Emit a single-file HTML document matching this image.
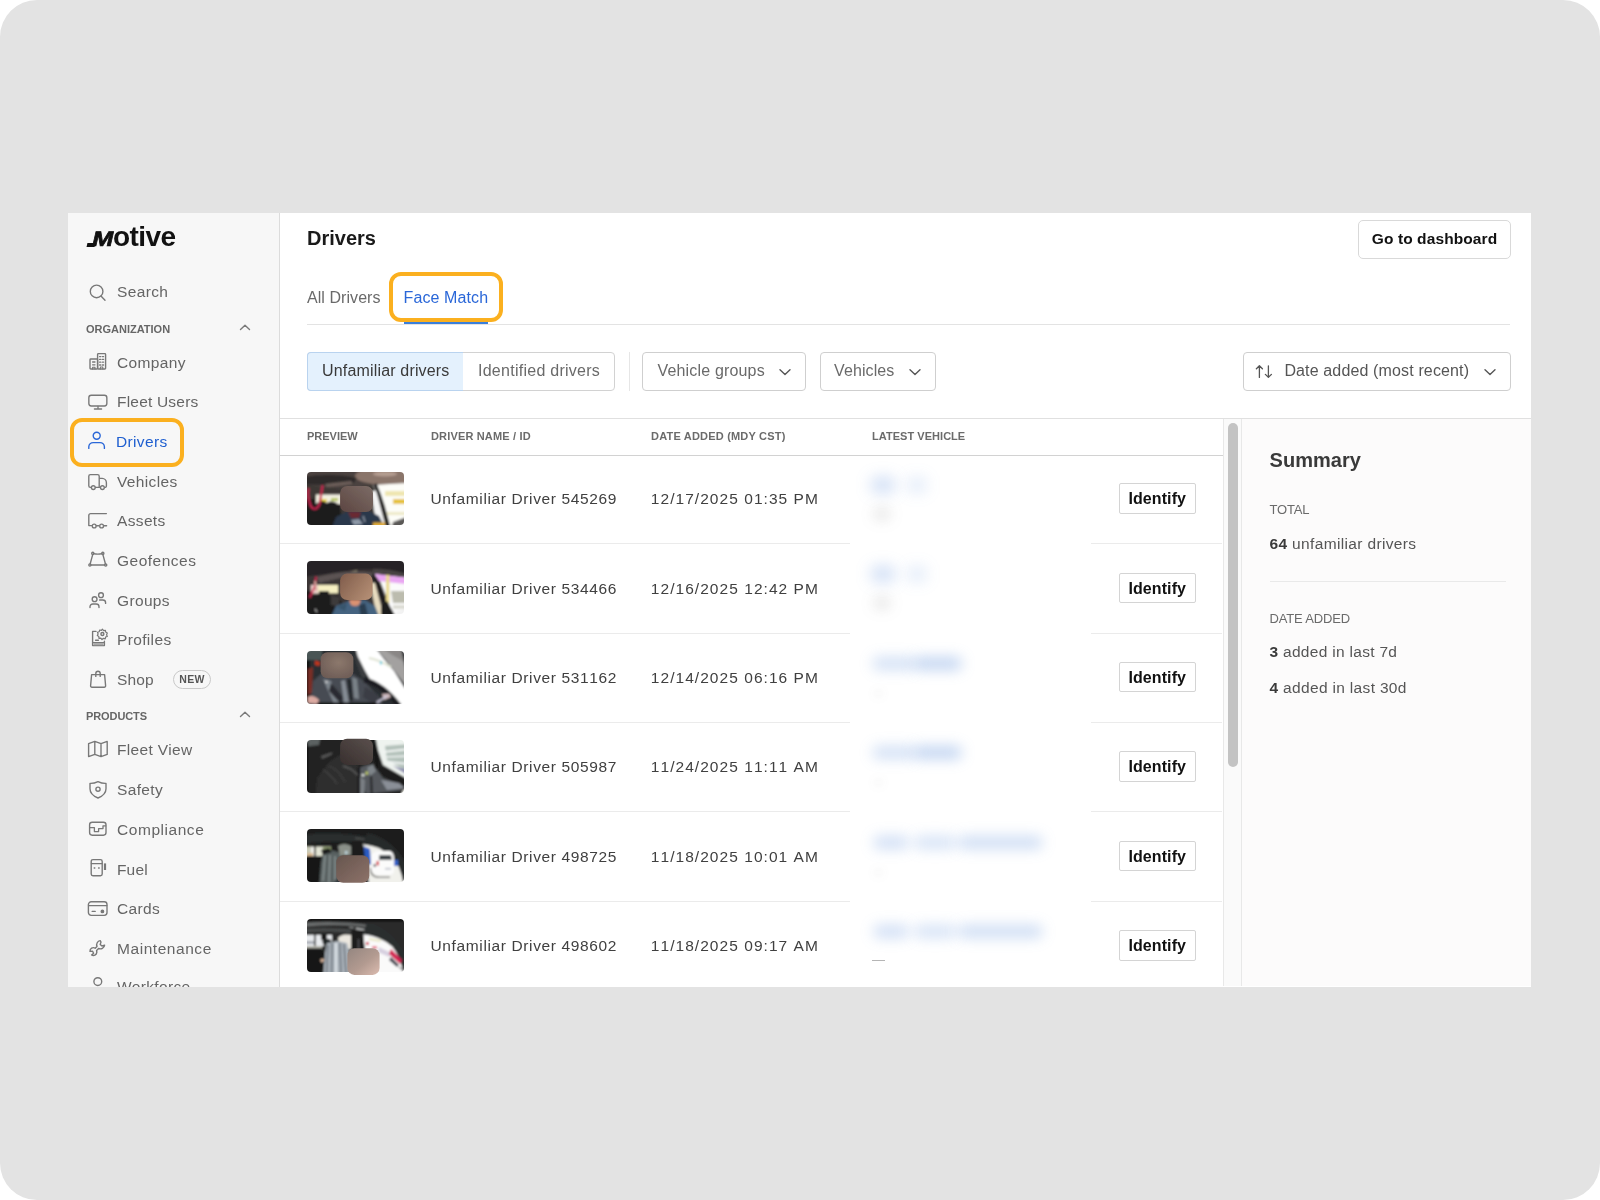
<!DOCTYPE html>
<html lang="en">
<head>
<meta charset="utf-8">
<title>Drivers - Face Match</title>
<style>
*{box-sizing:border-box;margin:0;padding:0}
html,body{width:1600px;height:1200px;overflow:hidden;background:#fff}
body{font-family:"Liberation Sans",Arial,sans-serif;color:#3d3d3d;position:relative}
.bg{position:absolute;left:0;top:0;width:1600px;height:1200px;background:#e3e3e3;border-radius:37px}
.app{opacity:.999;position:absolute;left:68px;top:213px;width:1463px;height:773.5px;background:#fff;overflow:hidden}
.abs{position:absolute;white-space:nowrap}
/* sidebar */
.side{position:absolute;left:0;top:0;width:212px;height:774px;background:#f7f7f7;border-right:1px solid #dcdcdc}
.nav{position:absolute;margin-top:.7px;left:49px;font-size:15.5px;color:#656565;white-space:nowrap;line-height:20px;letter-spacing:.35px}
.nav.act{color:#1f5fd0}
.sec{position:absolute;left:18px;font-size:11px;font-weight:bold;color:#666;letter-spacing:.1px;white-space:nowrap;line-height:12px}
.ico{position:absolute;margin-top:.5px;left:19px;width:22px;height:22px;overflow:visible}
.ico *{fill:none;stroke:#787878;stroke-width:1.38;stroke-linecap:round;stroke-linejoin:round}
.hl{position:absolute;border:4px solid #fbb01f;border-radius:12px}
/* main */
.main{position:absolute;left:212px;top:0;width:1251px;height:774px;background:#fff}
.btn{position:absolute;border:1px solid #cfcfcf;border-radius:4px;background:#fff;white-space:nowrap;text-align:center}
.th{position:absolute;top:217px;font-size:11px;font-weight:bold;color:#6b6b6b;letter-spacing:.1px;white-space:nowrap;line-height:12px}
.row{position:absolute;left:0;width:942px;height:90px}
.row .sep{position:absolute;left:0;bottom:0;width:942px;height:1px;background:#ebebeb}
.row .name,.row .date{position:absolute;top:35px;font-size:15.5px;line-height:20px;color:#404040;white-space:nowrap;letter-spacing:.58px}
.row .name{left:150.5px;font-kerning:none;letter-spacing:.63px}
.row .date{left:370.8px;letter-spacing:1.05px;font-kerning:none}
.row .idb{position:absolute;left:839px;top:29px;width:76.5px;height:30.5px;border:1px solid #d4d4d4;border-radius:2px;background:#fff;font-size:16px;font-weight:bold;color:#111;text-align:center;line-height:30.5px;letter-spacing:.08px}
.thumb{position:absolute;left:27px;top:17.7px;width:97px;height:53px}
.thumb svg{display:block}
.blur{position:absolute;border-radius:8px;filter:blur(4px)}
</style>
</head>
<body>
<div class="bg"></div>
<div class="app">
  <div class="side" id="side">
    <div class="abs" id="logo" style="left:18px;top:7.6px;font-size:28px;font-weight:bold;color:#111;letter-spacing:-.55px;line-height:32px"><span style="display:inline-block;font-size:21px;letter-spacing:0;transform:skewX(-13deg) scaleX(1.2);transform-origin:0 100%;margin-left:3.2px;margin-right:6.2px;-webkit-text-stroke:.7px #111">M</span>otive</div>
    <div class="abs" style="left:18.8px;top:29.6px;width:8px;height:3.8px;background:#111;transform:skewX(-13deg)"></div>

    <svg class="ico" style="top:68px" viewBox="0 0 22 22"><circle cx="9.6" cy="9.4" r="6.3"/><path d="M14.2 14.2 L18 18.2"/></svg>
    <div class="nav" style="top:68px">Search</div>

    <div class="sec" style="top:110px;letter-spacing:0px">ORGANIZATION</div>
    <svg class="ico" style="top:103.3px;left:166.2px" viewBox="0 0 22 22"><path d="M6.5 12.5 L11 8.3 L15.5 12.5" style="stroke:#7a7a7a;stroke-width:1.4"/></svg>

    <svg class="ico" style="top:138px" viewBox="0 0 22 22"><rect x="10.6" y="1.6" width="8" height="15.4" rx=".8"/><rect x="3" y="7" width="7.6" height="10" rx=".8"/><path d="M12.6 4.6 h1.2 M15.4 4.6 h1.2 M12.6 7.4 h1.2 M15.4 7.4 h1.2 M12.6 10.2 h1.2 M15.4 10.2 h1.2 M12.6 13 h1.2 M15.4 13 h1.2 M5.6 10 h2.4 M5.6 12.8 h2.4" style="stroke-width:1.3"/><path d="M13.4 17 v-2 h2.4 v2 M5.6 17 v-1.8 h2.4 v1.8" style="stroke-width:1.1"/></svg>
    <div class="nav" style="top:139px">Company</div>

    <svg class="ico" style="top:177px" viewBox="0 0 22 22"><rect x="1.85" y="4.25" width="18" height="10.7" rx="2.4"/><path d="M7.4 18 H14.6 M11 15.4 V17.6" style="stroke-width:1.3"/></svg>
    <div class="nav" style="top:178px;letter-spacing:0.2px">Fleet Users</div>

    <div class="hl" style="left:2px;top:205px;width:114px;height:49px"></div>
    <svg class="ico" style="top:217px" viewBox="0 0 22 22"><circle cx="9.7" cy="4.8" r="3.5" style="stroke:#2a67d8"/><path d="M1.8 17.4 V15.8 A4.4 4.4 0 0 1 6.2 11.6 H13 A4.4 4.4 0 0 1 17.4 15.8 V17.4" style="stroke:#2a67d8"/></svg>
    <div class="nav act" style="top:218px;left:48px">Drivers</div>

    <svg class="ico" style="top:257px" viewBox="0 0 22 22"><path d="M4 16.4 H3.4 A1.6 1.6 0 0 1 1.8 14.8 V5.2 A1.6 1.6 0 0 1 3.4 3.6 H10.6 A1.6 1.6 0 0 1 12.2 5.2 V16 M12.2 7.4 H15.2 A4.4 4.4 0 0 1 19.4 11.8 V15 A1.4 1.4 0 0 1 18.4 16.4 M8.6 16.4 H12.4"/><circle cx="6.3" cy="16.6" r="1.9"/><circle cx="15.4" cy="16.6" r="1.9"/></svg>
    <div class="nav" style="top:258px">Vehicles</div>

    <svg class="ico" style="top:296px" viewBox="0 0 22 22"><path d="M19.4 3.6 H3.6 A1.8 1.8 0 0 0 1.8 5.4 V15.6 H4.6 M17.4 15.8 H19.6 M9.6 15.8 H11.6"/><circle cx="7.2" cy="16" r="1.9"/><circle cx="14.6" cy="16" r="1.9"/></svg>
    <div class="nav" style="top:297px">Assets</div>

    <svg class="ico" style="top:336px" viewBox="0 0 22 22"><path d="M6.6 3.6 Q10.8 4.6 15 3.6 M15.9 4.6 L18.4 13.8 M3.2 13.8 L5.7 4.6 M4 15 H17.6"/><circle cx="5.8" cy="3.4" r="1.1"/><circle cx="15.8" cy="3.4" r="1.1"/><circle cx="2.9" cy="15" r="1.1"/><circle cx="18.7" cy="15" r="1.1"/></svg>
    <div class="nav" style="top:337px;letter-spacing:0.5px">Geofences</div>

    <svg class="ico" style="top:376px" viewBox="0 0 22 22"><circle cx="7.6" cy="9.2" r="2.4"/><circle cx="14" cy="5.2" r="2.4"/><path d="M3 17.6 V16.8 A2.8 2.8 0 0 1 5.8 14 H9.2 A2.8 2.8 0 0 1 12 16.8 V17.6 M12.6 10 H15.8 A2.8 2.8 0 0 1 18.6 12.8 V13.4"/></svg>
    <div class="nav" style="top:377px">Groups</div>

    <svg class="ico" style="top:413.6px;left:19.5px" viewBox="0 0 22 22"><path d="M8 4.4 H4.6 V18.6 H16.4 V14.2 M4.6 15.6 H16.4 M7.6 13.2 H10.4"/><circle cx="14.4" cy="7" r="1.5"/><path d="M14.4 2.2 L15.6 3.6 L17.4 3.3 L17.7 5.1 L19.3 6 L18.6 7.7 L19.3 9.4 L17.6 10 L17.2 11.8 L15.4 11.3 L14 12.5 L12.8 11.1 L11 11.4 L10.8 9.6 L9.3 8.6 L10.1 7 L9.5 5.3 L11.2 4.7 L11.7 3 L13.4 3.4 Z" style="stroke-width:1.2"/><path d="M5.4 17.2 H15.6" style="stroke-width:2.2;stroke-linecap:butt;stroke:#a8a8a8"/></svg>
    <div class="nav" style="top:416px">Profiles</div>

    <svg class="ico" style="top:455px" viewBox="0 0 22 22"><path d="M4.6 5.6 H17.6 L18.6 16.6 A1.4 1.4 0 0 1 17.2 18.2 H5 A1.4 1.4 0 0 1 3.6 16.6 Z M8.8 7.4 V4.4 A2.2 2.2 0 0 1 13.2 4.4 V7.4"/></svg>
    <div class="nav" style="top:456px;letter-spacing:0.1px">Shop</div>
    <div class="abs" style="left:105px;top:457px;width:38px;height:19px;border:1px solid #c9c9c9;border-radius:10px;font-size:10.5px;font-weight:bold;color:#555;text-align:center;line-height:17px;letter-spacing:.3px">NEW</div>

    <div class="sec" style="top:497px;letter-spacing:-0.1px">PRODUCTS</div>
    <svg class="ico" style="top:490.3px;left:166.2px" viewBox="0 0 22 22"><path d="M6.5 12.5 L11 8.3 L15.5 12.5" style="stroke:#7a7a7a;stroke-width:1.4"/></svg>

    <svg class="ico" style="top:525px" viewBox="0 0 22 22"><path d="M1.6 4.6 L7.8 2.4 L14 4.6 L20.2 2.4 V15.4 L14 17.6 L7.8 15.4 L1.6 17.6 Z M7.8 2.4 V15.4 M14 4.6 V17.6"/></svg>
    <div class="nav" style="top:526px">Fleet View</div>

    <svg class="ico" style="top:565px" viewBox="0 0 22 22"><path d="M11 2.6 Q7 4.6 3 4.4 V9.8 Q3 15.8 11 19 Q19 15.8 19 9.8 V4.4 Q15 4.6 11 2.6 Z"/><circle cx="11" cy="10.2" r="2.1"/></svg>
    <div class="nav" style="top:566px">Safety</div>

    <svg class="ico" style="top:605px" viewBox="0 0 22 22"><rect x="2.6" y="3.2" width="16.4" height="13" rx="2.6"/><path d="M3 8.6 H7.4 V12.6 H11.6 V9.6 H16 V6.8 H18.6" style="stroke-width:1.3"/></svg>
    <div class="nav" style="top:606px;letter-spacing:0.55px">Compliance</div>

    <svg class="ico" style="top:643px" viewBox="0 0 22 22"><rect x="4.2" y="2.6" width="11" height="16.2" rx="1.8"/><path d="M4.4 6.6 H15 M7.2 11 h.6 M11.6 11 h.6"/><path d="M18 6.4 V13" style="stroke-width:2.2;stroke-linecap:butt"/></svg>
    <div class="nav" style="top:646px;letter-spacing:0.15px">Fuel</div>

    <svg class="ico" style="top:684px" viewBox="0 0 22 22"><rect x="1.4" y="3.8" width="18.6" height="13.6" rx="2.8"/><path d="M1.6 7.6 H19.8 M5.2 13.4 H8.2"/><circle cx="15.4" cy="13.4" r="1.2" style="fill:#757575"/></svg>
    <div class="nav" style="top:685px">Cards</div>

    <svg class="ico" style="top:724px" viewBox="0 0 22 22"><path d="M13.2 2.6 A4.2 4.2 0 0 0 10 8.4 L8.2 10.2 A3.4 3.4 0 0 0 3 13.4 L5.6 13.2 L6.6 15.2 L4.6 17 A3.4 3.4 0 0 0 9.8 14.4 L9.6 12.4 L11.6 10.4 A4.2 4.2 0 0 0 17.6 7.2 L15 8 L13.2 6.4 L14 4 Z" style="stroke-width:1.4"/></svg>
    <div class="nav" style="top:725px;letter-spacing:0.55px">Maintenance</div>

    <svg class="ico" style="top:761.4px" viewBox="0 0 22 22"><circle cx="10.8" cy="6.6" r="3.9"/></svg>
    <div class="nav" style="top:763.7px">Workforce</div>
  </div>
  <div class="main" id="main">
    <div class="abs" style="left:27px;top:12px;font-size:20px;font-weight:bold;color:#1a1a1a;line-height:26px">Drivers</div>
    <div class="btn" style="left:1078px;top:7px;width:153px;height:38.5px;font-size:15.5px;font-weight:bold;color:#111;line-height:36px;border-radius:5px;border-color:#d9d9d9;letter-spacing:.1px">Go to dashboard</div>

    <div class="abs" style="left:27px;top:74.5px;font-size:16px;color:#6a6a6a;line-height:20px;letter-spacing:.06px">All Drivers</div>
    <div class="abs" style="left:123.6px;top:74.5px;font-size:16px;color:#2a67d8;line-height:20px;letter-spacing:.1px">Face Match</div>
    <div class="abs" style="left:27px;top:111px;width:1203px;height:1px;background:#e3e3e3"></div>
    <div class="abs" style="left:124px;top:108px;width:84px;height:3px;background:#3a7fdc"></div>
    <div class="hl" style="left:109px;top:59px;width:114px;height:50px;border-radius:12px"></div>

    <div class="abs" style="left:27px;top:139px;width:308px;height:39px;border:1px solid #d2d2d2;border-radius:4px;background:#fff"></div>
    <div class="abs" style="left:27px;top:139px;width:156px;height:39px;border:1px solid #b9d3ef;border-right:none;border-radius:4px 0 0 4px;background:#e4f1fd"></div>
    <div class="abs" style="left:42px;top:148px;font-size:16px;color:#3a3a3a;line-height:20px;letter-spacing:.17px">Unfamiliar drivers</div>
    <div class="abs" style="left:198px;top:148px;font-size:16px;color:#6a6a6a;line-height:20px;letter-spacing:.26px">Identified drivers</div>
    <div class="abs" style="left:348.5px;top:139px;width:1px;height:39px;background:#e6e6e6"></div>

    <div class="btn" style="left:362px;top:139px;width:164px;height:39px"></div>
    <div class="abs" style="left:377.5px;top:148px;font-size:16px;color:#6a6a6a;line-height:20px;letter-spacing:.17px">Vehicle groups</div>
    <svg class="abs" style="left:498px;top:153px" width="14" height="12" viewBox="0 0 14 12"><path d="M2 3.8 L7 8.4 L12 3.8" fill="none" stroke="#555" stroke-width="1.4" stroke-linecap="round" stroke-linejoin="round"/></svg>

    <div class="btn" style="left:540px;top:139px;width:116px;height:39px"></div>
    <div class="abs" style="left:554px;top:148px;font-size:16px;color:#6a6a6a;line-height:20px;letter-spacing:.1px">Vehicles</div>
    <svg class="abs" style="left:628px;top:153px" width="14" height="12" viewBox="0 0 14 12"><path d="M2 3.8 L7 8.4 L12 3.8" fill="none" stroke="#555" stroke-width="1.4" stroke-linecap="round" stroke-linejoin="round"/></svg>

    <div class="btn" style="left:963px;top:139px;width:268px;height:39px"></div>
    <svg class="abs" style="left:974px;top:149px" width="22" height="20" viewBox="0 0 22 20"><path d="M5.4 15.4 V4 M2.4 6.8 L5.4 3.8 L8.4 6.8 M14.4 3.8 V15.2 M11.4 12.4 L14.4 15.4 L17.4 12.4" fill="none" stroke="#555" stroke-width="1.3" stroke-linecap="round" stroke-linejoin="round"/></svg>
    <div class="abs" style="left:1004.4px;top:148px;font-size:16px;color:#555;line-height:20px;letter-spacing:.14px">Date added (most recent)</div>
    <svg class="abs" style="left:1203px;top:153px" width="14" height="12" viewBox="0 0 14 12"><path d="M2 3.8 L7 8.4 L12 3.8" fill="none" stroke="#555" stroke-width="1.4" stroke-linecap="round" stroke-linejoin="round"/></svg>

    <div class="abs" style="left:0;top:205px;width:1251px;height:1px;background:#e0e0e0"></div>

    <div class="th" style="left:27px;letter-spacing:0">PREVIEW</div>
    <div class="th" style="left:151px;letter-spacing:.16px">DRIVER NAME / ID</div>
    <div class="th" style="left:371px;letter-spacing:.2px">DATE ADDED (MDY CST)</div>
    <div class="th" style="left:592px;letter-spacing:.04px">LATEST VEHICLE</div>
    <div class="abs" style="left:0;top:241.6px;width:943px;height:1.6px;background:#d2d2d2"></div>

    <div class="row" style="top:241.1px">
      <div class="thumb" id="t1"><svg width="97" height="53" viewBox="0 0 97 53" style="overflow:visible;display:block"><defs><clipPath id="c1"><rect x="0" y="0" width="97" height="53" rx="4"/></clipPath><filter id="f1" x="-10%" y="-10%" width="120%" height="120%"><feGaussianBlur stdDeviation="0.95"/></filter><linearGradient id="g1" x1="1" y1="0" x2="0" y2="1"><stop offset="0" stop-color="#7c6c66"/><stop offset="1" stop-color="#5c4541"/></linearGradient><filter id="fb"><feGaussianBlur stdDeviation="0.45"/></filter></defs><g clip-path="url(#c1)"><g filter="url(#f1)"><rect x="-6" y="-6" width="110" height="66" fill="#3c3735"/><path d="M-5 -5 H102 V14 Q80 10 60 14 Q40 20 -5 12 Z" fill="#4b423f"/><ellipse cx="80" cy="4" rx="32" ry="9" fill="#8a746a"/><ellipse cx="78" cy="2" rx="12" ry="2.5" fill="#b39c90"/><path d="M-5 5 Q25 0 50 6 L46 12 Q20 14 -5 12 Z" fill="#2f2c2b"/><path d="M18 12 L44 9 L46 12 L20 15 Z" fill="#6d5f5a"/><rect x="9" y="22.5" width="25" height="9.5" fill="#f3f1e2"/><rect x="12" y="27" width="8" height="3" fill="#e8d44a"/><rect x="24" y="26" width="7" height="3" fill="#b8c860"/><path d="M-5 27 H8 V33 Q14 26 20 31 Q26 27 33 34 L36 58 H-5 Z" fill="#1c1a1d"/><path d="M66 13 L102 11 V50 L82 58 L78 42 L71 24 Z" fill="#fdfdf8"/><rect x="78" y="19" width="24" height="5" fill="#efe6b0"/><rect x="86" y="27" width="16" height="5" fill="#e6c23c"/><rect x="80" y="40" width="20" height="3" fill="#eee9c8"/><path d="M64 20 L69 18 L79 56 L70 56 Z" fill="#f4f4f4"/><path d="M68 12 L72 22 L76 34 L82 56" stroke="#151515" stroke-width="3.4" fill="none"/><path d="M84 58 L86 50 L102 44 V58 Z" fill="#5a5856"/><path d="M24 58 L29 45 L41 39 L60 38 L72 44 L79 58 Z" fill="#2a384c"/><path d="M41 40 H54 L52 46 H44 Z" fill="#6b2a32"/><path d="M44 48 L52 47 L56 52 L47 53 Z" fill="#8f9aa8"/><path d="M56 44 l2 6" stroke="#aab4c0" stroke-width="1"/><rect x="66" y="50.5" width="12" height="4" fill="#e4ae35"/><path d="M15.5 14 C14.5 20 13.5 27 12.8 31 C10.5 38.5 5 38.5 3 32 C1 26 0.8 21 1.6 17" stroke="#c8234f" stroke-width="2.1" fill="none" stroke-linecap="round"/></g></g><rect x="33.1" y="13.9" width="32.9" height="26.2" rx="7" fill="url(#g1)" filter="url(#fb)"/></svg></div>
      <div class="name">Unfamiliar Driver 545269</div>
      <div class="date">12/17/2025 01:35 PM</div>
      <div class="idb">Identify</div>
      <div class="sep"></div>
    </div>
    <div class="row" style="top:330.5px">
      <div class="thumb" id="t2"><svg width="97" height="53" viewBox="0 0 97 53" style="overflow:visible;display:block"><defs><clipPath id="c2"><rect x="0" y="0" width="97" height="53" rx="4"/></clipPath><filter id="f2" x="-10%" y="-10%" width="120%" height="120%"><feGaussianBlur stdDeviation="0.95"/></filter><linearGradient id="g2" x1="0" y1="0.2" x2="1" y2="0.8"><stop offset="0" stop-color="#84604e"/><stop offset="1" stop-color="#b48e74"/></linearGradient></defs><g clip-path="url(#c2)"><g filter="url(#f2)"><rect x="-6" y="-6" width="110" height="66" fill="#3a3536"/><path d="M-5 -5 H102 V13 Q70 6 40 10 Q20 13 -5 16 Z" fill="#262425"/><path d="M18 18 Q34 13 50 9 L50 12 Q36 16 19 20 Z" fill="#8c846e"/><path d="M10 16 Q40 8 66 12 L66 16 Q40 14 12 22 Z" fill="#5b5352"/><path d="M66 8 Q85 8 102 14 V18 Q84 12 66 13 Z" fill="#4a4444"/><rect x="4" y="24" width="27" height="8.3" fill="#f6f0c2"/><rect x="4" y="24" width="7" height="8.3" fill="#f1d6cf"/><path d="M-5 30 H4 V34 H12 V30 H22 V34 H31 L36 44 L30 58 H-5 Z" fill="#1b1a1c"/><path d="M24 34 L33 36 L32 46 L24 44 Z" fill="#3c3a3a"/><path d="M67 13 L102 17 V58 H86 L81 40 L73 20 Z" fill="#fbfbfb"/><path d="M68 13 L100 17 L98 23 L72 20 Z" fill="#e9a6f2"/><rect x="79" y="14" width="3.4" height="28" fill="#e9d98e"/><path d="M84 30 H102 V42 H86 Z" fill="#bcbcae"/><path d="M86 44 h14 v4 h-14z" fill="#dcdcd4"/><path d="M63 22 L68 22 L77 56 L70 56 Z" fill="#e8dcc0"/><path d="M66 13 L71 24 L76 38 L79 46" stroke="#121212" stroke-width="3" fill="none"/><path d="M74 44 L80 40 L90 58 H74 Z" fill="#1c1c1c"/><path d="M88 58 L90 50 L102 47 V58 Z" fill="#f2f2f2"/><path d="M23 58 L29 45 L42 40 L58 39 L68 45 L73 58 Z" fill="#446380"/><path d="M52 44 L58 42 L62 58 H54 Z" fill="#2c3e50"/><path d="M30 46 L40 42 L38 50 Z" fill="#38546c"/><path d="M42 39 H54 L52 44 Q48 46 44 44 Z" fill="#da9272"/><path d="M9 16.5 L7.6 26 L3 36" stroke="#c8234f" stroke-width="1.8" fill="none" stroke-linecap="round"/><path d="M8 20 L9.5 30" stroke="#d9aaa0" stroke-width="2" fill="none"/><path d="M8 48 l2 3" stroke="#ddd" stroke-width="1"/></g></g><rect x="33.1" y="12.6" width="32.5" height="26.5" rx="7" fill="url(#g2)" filter="url(#fb)"/></svg></div>
      <div class="name">Unfamiliar Driver 534466</div>
      <div class="date">12/16/2025 12:42 PM</div>
      <div class="idb">Identify</div>
      <div class="sep"></div>
    </div>
    <div class="row" style="top:419.9px">
      <div class="thumb" id="t3"><svg width="97" height="53" viewBox="0 0 97 53" style="overflow:visible;display:block"><defs><clipPath id="c3"><rect x="0" y="0" width="97" height="53" rx="4"/></clipPath><filter id="f3" x="-10%" y="-10%" width="120%" height="120%"><feGaussianBlur stdDeviation="0.95"/></filter><radialGradient id="g3" cx="0.55" cy="0.4" r="0.7"><stop offset="0" stop-color="#8c786c"/><stop offset="1" stop-color="#6c5b55"/></radialGradient></defs><g clip-path="url(#c3)"><g filter="url(#f3)"><rect x="-6" y="-6" width="110" height="66" fill="#2b2d30"/><rect x="-5" y="-5" width="20" height="14" fill="#4a5454"/><rect x="-5" y="9" width="8" height="50" fill="#141414"/><path d="M1 18 L6 16 L5 42 L1 44 Z" fill="#7a2e26"/><path d="M8 9.5 L13 11 L12.5 15 L8 14 Z" fill="#c0341f"/><path d="M3 58 L6 30 L14 23 H46 L57 30 L72 46 L77 58 Z" fill="#474b52"/><path d="M16 28 L24 30 L33 52 L27 53 Z" fill="#7d848c"/><path d="M34 30 L38 29 L42 52 L37 52 Z" fill="#858c94"/><path d="M45 26 L50 28 L52 48 L47 47 Z" fill="#7a8288"/><path d="M24 32 L36 46 L34 53 L22 40 Z" fill="#2a2c30"/><path d="M40 28 L44 28 L46 50 L43 50 Z" fill="#23252a"/><path d="M48 -5 H67 L77 8 L87 20 L97 36 L102 40 V58 H93 L82 42 L64 30 L57 18 L51 6 Z" fill="#ffffff"/><path d="M67 -5 H93 L98 16 L100 36 L89 22 L78 8 Z" fill="#a3a1a0"/><path d="M72 -5 H93 L96 10 Q84 4 72 -5 Z" fill="#8a8786"/><path d="M62 7 Q72 9 84 16" stroke="#dfe3d2" stroke-width="2.2" fill="none"/><rect x="73" y="10" width="1.6" height="3.4" fill="#35c7e0"/><path d="M47 2 L51 6 L57 18 L60 26 L55 27 L50 14 Z" fill="#3a3c40"/><path d="M57 29 Q76 33 93 56" stroke="#1d1f22" stroke-width="5" fill="none"/><path d="M58 36 L72 44 L68 54 L56 46 Z" fill="#3a3e44"/><path d="M75 43 L82 42.5 L84 46 L77 49 Z" fill="#cdb6b8"/><path d="M69 52 L80 45" stroke="#c9c6d8" stroke-width="1.6"/><path d="M0.5 46 Q6 43 12 49 L11 53 L1 52 Z" fill="#dcaaa2"/><circle cx="19.5" cy="31" r="1" fill="#e6e6e6"/><rect x="10" y="51.5" width="60" height="6" fill="#111"/></g></g><rect x="13.6" y="1.2" width="32.8" height="26" rx="7" fill="url(#g3)" filter="url(#fb)"/></svg></div>
      <div class="name">Unfamiliar Driver 531162</div>
      <div class="date">12/14/2025 06:16 PM</div>
      <div class="idb">Identify</div>
      <div class="sep"></div>
    </div>
    <div class="row" style="top:509.3px">
      <div class="thumb" id="t4"><svg width="97" height="53" viewBox="0 0 97 53" style="overflow:visible;display:block"><defs><clipPath id="c4"><rect x="0" y="0" width="97" height="53" rx="4"/></clipPath><filter id="f4" x="-10%" y="-10%" width="120%" height="120%"><feGaussianBlur stdDeviation="0.95"/></filter><linearGradient id="g4" x1="1" y1="0" x2="0" y2="1"><stop offset="0" stop-color="#5a504d"/><stop offset="1" stop-color="#382f2e"/></linearGradient></defs><g clip-path="url(#c4)"><g filter="url(#f4)"><rect x="-6" y="-6" width="110" height="66" fill="#232323"/><path d="M-5 -5 H14 L12 5 L-5 7 Z" fill="#5c6262"/><rect x="-5" y="2" width="6" height="60" fill="#0d0d0d"/><path d="M8 58 L10 38 L22 22 L34 14 L52 26 L56 58 Z" fill="#2e2e2e"/><path d="M14 16 L26 12 L24 15 L15 19 Z" fill="#555"/><path d="M16 30 Q24 34 30 44" stroke="#3c3c3c" stroke-width="2" fill="none"/><path d="M22 26 Q32 30 38 42" stroke="#3a3a3a" stroke-width="2" fill="none"/><path d="M36 26 L44 29 L52 36" stroke="#5e5e5e" stroke-width="1.4" fill="none"/><path d="M68 -5 H102 V40 L76 25 L71 10 Z" fill="#eef3ef"/><path d="M78 6 L102 4 V32 L80 20 Z" fill="#b3c1ba"/><path d="M76 12 L102 9" stroke="#f3f6f4" stroke-width="2"/><path d="M78 17 L102 16" stroke="#eef2f0" stroke-width="1.6"/><path d="M82 22 L102 24" stroke="#f3f6f6" stroke-width="1.8"/><path d="M86 26 L102 30 V36 Z" fill="#8f8fb0"/><path d="M88 -5 H102 V3 Z" fill="#cfe0b8"/><path d="M66 -2 L70 8 L72 26 L69 28 L66 12 Z" fill="#141414"/><path d="M71 26 L102 40 V48 L84 40 L72 32 Z" fill="#1f1f1f"/><path d="M52 28 L62 24 L70 30 L76 38 L92 44 L96 50 L60 54 L52 44 Z" fill="#54585d"/><path d="M74 40 L92 43 L98 48 L80 50 Z" fill="#8a8f97"/><path d="M60 28 L66 24 L69 31 L63 36 Z" fill="#7f858a"/><path d="M52 36 L58 40 L57 58 H52 Z" fill="#7a7f84"/><path d="M52 27 V58" stroke="#111" stroke-width="2.2"/><path d="M64 36 L65 58" stroke="#202224" stroke-width="2"/><rect x="58.5" y="31.5" width="2.6" height="3.2" fill="#bcc86a"/><rect x="54.5" y="34" width="3" height="2.4" fill="#d8dcd8"/><path d="M93 58 L96 50 L102 48 V58 Z" fill="#e8e8e0"/></g></g><rect x="33.1" y="-1.3" width="32.9" height="26.2" rx="7" fill="url(#g4)" filter="url(#fb)"/></svg></div>
      <div class="name">Unfamiliar Driver 505987</div>
      <div class="date">11/24/2025 11:11 AM</div>
      <div class="idb">Identify</div>
      <div class="sep"></div>
    </div>
    <div class="row" style="top:598.7px">
      <div class="thumb" id="t5"><svg width="97" height="53" viewBox="0 0 97 53" style="overflow:visible;display:block"><defs><clipPath id="c5"><rect x="0" y="0" width="97" height="53" rx="4"/></clipPath><filter id="f5" x="-10%" y="-10%" width="120%" height="120%"><feGaussianBlur stdDeviation="0.95"/></filter><linearGradient id="g5" x1="0" y1="0" x2="1" y2="1"><stop offset="0" stop-color="#66554e"/><stop offset="1" stop-color="#8d7269"/></linearGradient></defs><g clip-path="url(#c5)"><g filter="url(#f5)"><rect x="-6" y="-6" width="110" height="66" fill="#1d1f1f"/><path d="M-5 6 Q30 2 60 8 L60 14 Q30 10 -5 15 Z" fill="#2b2d2d"/><path d="M48 9 L62 11 L70 13" stroke="#5a5c5a" stroke-width="1.2"/><path d="M56 15 L71 18 L85 28 L94 40 L98 58 H62 L60 30 Z" fill="#f1f1ec"/><path d="M60 4 Q86 8 102 40 V58 H97 Q94 36 84 26 Q72 17 56 15 Z" fill="#27292a"/><rect x="-5" y="17.5" width="29" height="9.5" fill="#c9cbb8"/><rect x="4" y="18" width="3" height="9" fill="#f0f0ea"/><rect x="9" y="18" width="6" height="9" fill="#e2e4d4"/><rect x="7" y="17" width="1.6" height="11" fill="#151515"/><rect x="16" y="18" width="8" height="4" fill="#8a9a6a"/><rect x="0" y="24" width="6" height="3" fill="#d8b890"/><rect x="-5" y="28" width="18" height="32" fill="#161818"/><path d="M12 58 L14 34 L16 24 L24 21 L34 24 L36 40 L34 58 Z" fill="#586060"/><path d="M18 26 l-2 26 M23 26 l-1 28 M28 27 l0 24" stroke="#8a9494" stroke-width="1.5" fill="none"/><path d="M14 21 L22 19 L25 23 L16 26 Z" fill="#1a1a1a"/><path d="M31 17 Q37 13 44 17 L44 26 L33 27 Z" fill="#8b9189"/><rect x="38" y="22" width="2.5" height="3.4" fill="#bcd0d8"/><path d="M44 12 H56 V31 H44 Z" fill="#1b1c1c"/><path d="M57 17.5 L63 20 L64 36 L58 34 Z" fill="#2a5bc4"/><rect x="86" y="31" width="5" height="6" fill="#3463c8"/><path d="M64 27 Q66 22 72 22 H83 Q87 23 87 30 V43 Q86 46 82 46 H70 Q65 45 64 40 Z" fill="#fbfbfb"/><path d="M72.5 26 H84 L85 31 H72 Z" fill="#3e4246"/><rect x="69.6" y="32" width="2.2" height="4.4" fill="#d0202e"/><rect x="78" y="39" width="6" height="1.4" fill="#b4b8c4"/><path d="M64 38 Q64 47 72 47.5 H83 L83 49 H70 Q63 48 62.5 40 Z" fill="#8c8c8a"/><rect x="66.8" y="35" width="1.6" height="3" fill="#111"/><path d="M26 58 L30 48 L38 44 L40 58 Z" fill="#33393c"/></g></g><rect x="29.2" y="26.2" width="33.1" height="27.5" rx="7" fill="url(#g5)" filter="url(#fb)"/></svg></div>
      <div class="name">Unfamiliar Driver 498725</div>
      <div class="date">11/18/2025 10:01 AM</div>
      <div class="idb">Identify</div>
      <div class="sep"></div>
    </div>
    <div class="row" style="top:688.1px">
      <div class="thumb" id="t6"><svg width="97" height="53" viewBox="0 0 97 53" style="overflow:visible;display:block"><defs><clipPath id="c6"><rect x="0" y="0" width="97" height="53" rx="4"/></clipPath><filter id="f6" x="-10%" y="-10%" width="120%" height="120%"><feGaussianBlur stdDeviation="0.95"/></filter><linearGradient id="g6" x1="0" y1="0" x2="1" y2="1"><stop offset="0" stop-color="#948680"/><stop offset="0.55" stop-color="#b29a90"/><stop offset="1" stop-color="#dcbcb0"/></linearGradient></defs><g clip-path="url(#c6)"><g filter="url(#f6)"><rect x="-6" y="-6" width="110" height="66" fill="#2a2c2c"/><rect x="-5" y="-5" width="110" height="8" fill="#171919"/><path d="M-5 4 Q30 1 62 6 L62 8.5 Q30 4 -5 8 Z" fill="#6b6d6d"/><path d="M-5 10 Q25 8 46 11 L46 14 Q25 11 -5 14 Z" fill="#4a4c4c"/><path d="M42 8 L47 9" stroke="#9a9c9c" stroke-width="1.2"/><path d="M49 9.5 L60 11.5 L66 13" stroke="#c8caca" stroke-width="1.3"/><path d="M56 15 L73 18 L86 28 L95 42 L98 58 H70 L58 30 Z" fill="#fafafa"/><path d="M60 3 Q86 8 102 42 V58 H97 Q94 38 85 27 Q72 17 56 15 Z" fill="#2b2d2e"/><rect x="-5" y="16" width="30" height="11" fill="#e9ebee"/><rect x="7" y="15" width="1.6" height="13" fill="#141414"/><rect x="14" y="15" width="6" height="6" fill="#1a1a1a"/><rect x="-5" y="22" width="12" height="3" fill="#a9adb6"/><rect x="-5" y="27" width="20" height="2.4" fill="#b4b4aa"/><path d="M-5 29.4 H14 L18 36 L17 58 H-5 Z" fill="#151717"/><path d="M15 22 Q19 18 24 21 L25 25 L17 27 Z" fill="#1f2020"/><path d="M31 19 Q35 14 44 16 L45 30 L33 30 Z" fill="#ebe7df"/><path d="M16 58 L18 34 L20 24 L30 22 L40 24 L43 36 L42 58 Z" fill="#aab2ba"/><path d="M21 26 l-1.5 30 M25 24 l-0.5 32 M33 24 l1 32 M37 25 l2 30" stroke="#69717a" stroke-width="1.5" fill="none"/><path d="M29 24 l0 32" stroke="#dfe5ea" stroke-width="2" fill="none"/><path d="M44 11 H56.5 V31 H44 Z" fill="#1b1d1d"/><path d="M51.5 20 v10" stroke="#55595c" stroke-width="1"/><rect x="59" y="23" width="2.6" height="3" fill="#d02444"/><path d="M65 27.5 h5 v2 h-5z" fill="#e24a68"/><path d="M62 19 L74 21 L73 23 L62 21 Z" fill="#e8e6c0"/><path d="M72 28 L84 34 L82 38 L71 33 Z" fill="#d7d0e0"/><path d="M84 30 L95 41 L93 45 L82 35 Z" fill="#d32452"/><path d="M84 38 L92 46 L90 48 L82 41 Z" fill="#3a3c48"/><path d="M92 48 L97 52" stroke="#888" stroke-width="1.5"/><path d="M13 41 Q16 38 17.5 41 L15 44 Z" fill="#d6b29a"/></g></g><rect x="40.4" y="29.3" width="32.2" height="26.6" rx="7" fill="url(#g6)" filter="url(#fb)"/></svg></div>
      <div class="name">Unfamiliar Driver 498602</div>
      <div class="date">11/18/2025 09:17 AM</div>
      <div class="idb">Identify</div>
      <div class="sep"></div>
    </div>
    <div class="abs" id="veh" style="left:0;top:0"><div class="blur" style="left:591.0px;top:264.5px;width:24.0px;height:14.0px;background:rgba(66,124,214,0.30);filter:blur(8px)"></div><div class="blur" style="left:628.0px;top:264.5px;width:18.0px;height:14.0px;background:rgba(66,124,214,0.20);filter:blur(8px)"></div><div class="blur" style="left:593.0px;top:295.0px;width:18.0px;height:12.0px;background:rgba(80,80,80,.15);filter:blur(7px)"></div><div class="abs" style="left:570px;top:327.5px;width:241px;height:5px;background:#fff"></div><div class="blur" style="left:591.0px;top:353.9px;width:24.0px;height:14.0px;background:rgba(66,124,214,0.30);filter:blur(8px)"></div><div class="blur" style="left:628.0px;top:353.9px;width:18.0px;height:14.0px;background:rgba(66,124,214,0.20);filter:blur(8px)"></div><div class="blur" style="left:593.0px;top:384.4px;width:18.0px;height:12.0px;background:rgba(80,80,80,.15);filter:blur(7px)"></div><div class="abs" style="left:570px;top:416.9px;width:241px;height:5px;background:#fff"></div><div class="blur" style="left:592.0px;top:443.8px;width:44.0px;height:13.0px;background:rgba(66,124,214,0.24);filter:blur(7px)"></div><div class="blur" style="left:634.0px;top:443.8px;width:48.0px;height:13.0px;background:rgba(66,124,214,0.33);filter:blur(7px)"></div><div class="blur" style="left:594.0px;top:476.8px;width:9.0px;height:7.0px;background:rgba(90,90,90,.06);filter:blur(4px)"></div><div class="abs" style="left:570px;top:506.3px;width:241px;height:5px;background:#fff"></div><div class="blur" style="left:592.0px;top:533.2px;width:44.0px;height:13.0px;background:rgba(66,124,214,0.24);filter:blur(7px)"></div><div class="blur" style="left:634.0px;top:533.2px;width:48.0px;height:13.0px;background:rgba(66,124,214,0.33);filter:blur(7px)"></div><div class="blur" style="left:594.0px;top:566.2px;width:9.0px;height:7.0px;background:rgba(90,90,90,.06);filter:blur(4px)"></div><div class="abs" style="left:570px;top:595.7px;width:241px;height:5px;background:#fff"></div><div class="blur" style="left:593.0px;top:622.6px;width:36.0px;height:13.0px;background:rgba(66,124,214,0.25);filter:blur(7px)"></div><div class="blur" style="left:634.0px;top:622.6px;width:42.0px;height:13.0px;background:rgba(66,124,214,0.22);filter:blur(7px)"></div><div class="blur" style="left:678.0px;top:622.6px;width:85.0px;height:13.0px;background:rgba(66,124,214,0.26);filter:blur(7px)"></div><div class="blur" style="left:594.0px;top:655.6px;width:9.0px;height:7.0px;background:rgba(90,90,90,.06);filter:blur(4px)"></div><div class="abs" style="left:570px;top:685.1px;width:241px;height:5px;background:#fff"></div><div class="blur" style="left:593.0px;top:712.0px;width:36.0px;height:13.0px;background:rgba(66,124,214,0.25);filter:blur(7px)"></div><div class="blur" style="left:634.0px;top:712.0px;width:42.0px;height:13.0px;background:rgba(66,124,214,0.22);filter:blur(7px)"></div><div class="blur" style="left:678.0px;top:712.0px;width:85.0px;height:13.0px;background:rgba(66,124,214,0.26);filter:blur(7px)"></div><div class="abs" style="left:592px;top:746.5px;width:13px;height:1.4px;background:#b5b5b5"></div></div>
    <div class="abs" style="left:943px;top:206px;width:19px;height:567px;background:#fafafa;border-left:1px solid #e8e8e8;border-right:1px solid #e8e8e8"></div>
    <div class="abs" style="left:948px;top:210px;width:10px;height:344px;background:#c3c3c3;border-radius:5px"></div>
    <div class="abs" id="sum" style="left:962px;top:206px;width:289px;height:567px;background:#fcfbfb">
      <div class="abs" style="left:27.5px;top:28px;font-size:20px;font-weight:bold;color:#3a3a3a;line-height:26px;letter-spacing:.05px">Summary</div>
      <div class="abs" style="left:27.5px;top:83px;font-size:13px;color:#6a6a6a;line-height:16px;letter-spacing:-.15px">TOTAL</div>
      <div class="abs" style="left:27.5px;top:115px;font-size:15.5px;color:#555;line-height:20px;letter-spacing:.35px"><b style="color:#3a3a3a">64</b> unfamiliar drivers</div>
      <div class="abs" style="left:27.5px;top:162.3px;width:236px;height:1px;background:#e9e9e9"></div>
      <div class="abs" style="left:27.5px;top:191.5px;font-size:13px;color:#6a6a6a;line-height:16px;letter-spacing:-.15px">DATE ADDED</div>
      <div class="abs" style="left:27.5px;top:222.7px;font-size:15.5px;color:#555;line-height:20px;letter-spacing:.3px"><b style="color:#3a3a3a">3</b> added in last 7d</div>
      <div class="abs" style="left:27.5px;top:258.7px;font-size:15.5px;color:#555;line-height:20px;letter-spacing:.33px"><b style="color:#3a3a3a">4</b> added in last 30d</div>
    </div>
  </div>
</div>
</body>
</html>
